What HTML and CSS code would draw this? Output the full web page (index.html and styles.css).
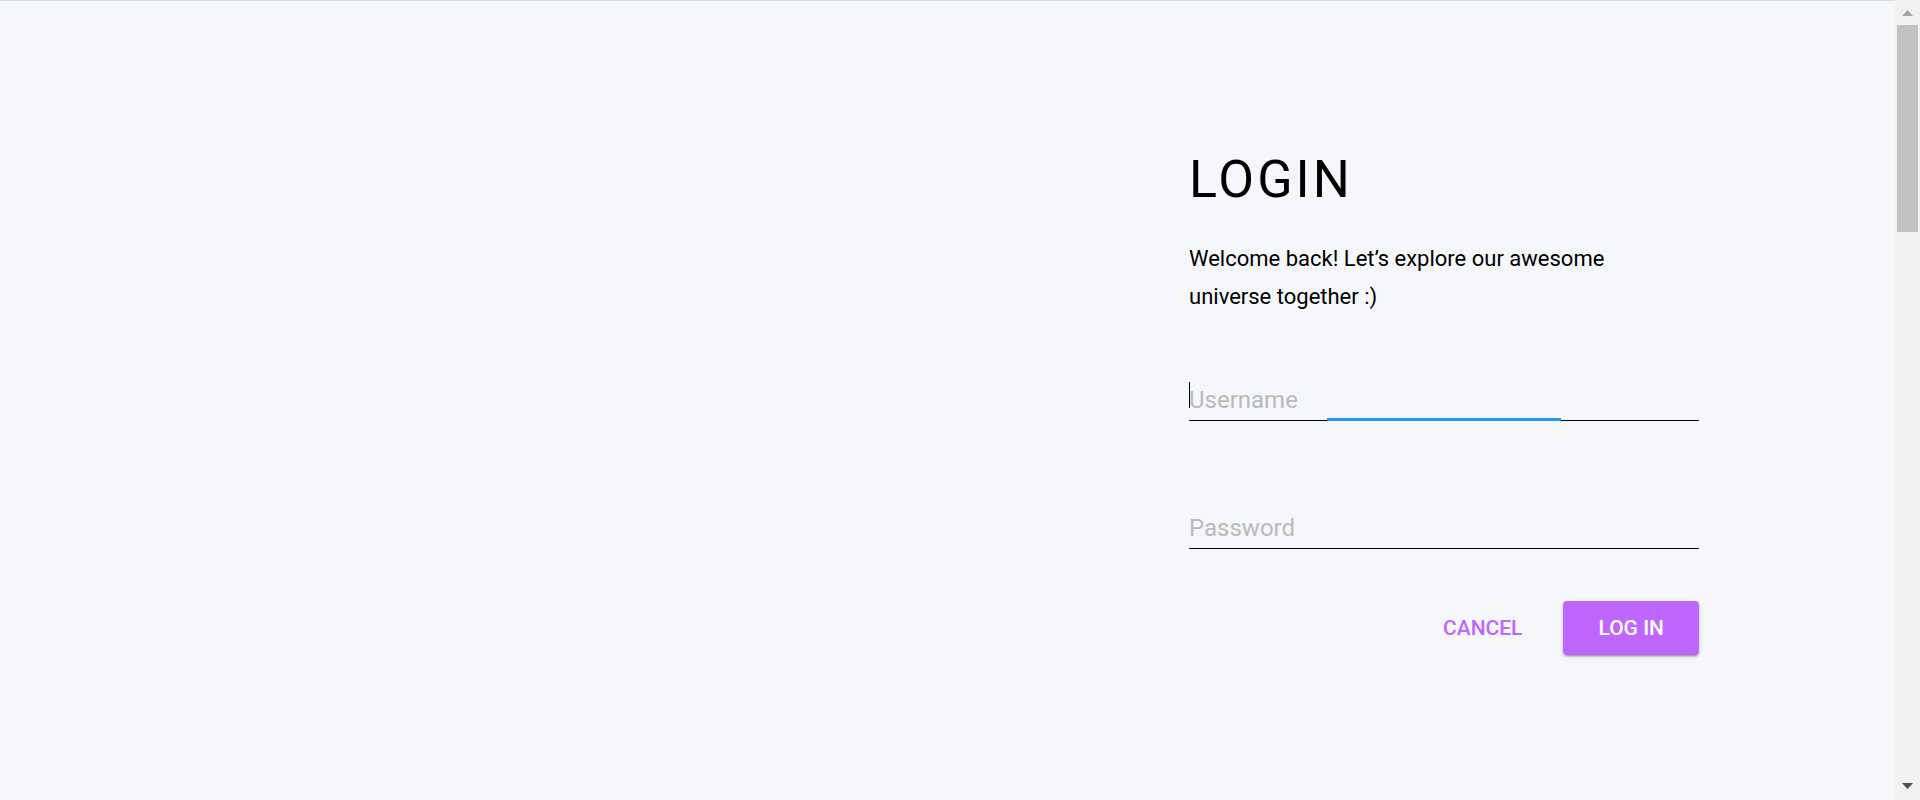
FILE: index.html
```html
<!DOCTYPE html>
<html lang="en">
<head>
<meta charset="utf-8">
<title>Login</title>
<link rel="stylesheet" href="styles.css">
</head>
<body>
<main class="page">
  <div class="side"></div>
  <section class="form">
    <h1 class="title">LOGIN</h1>
    <p class="intro">Welcome back! Let’s explore our awesome universe together :)</p>
    <div class="field field-user">
      <input class="input" type="text" placeholder="Username">
      <span class="caret"></span>
      <span class="focus-bar"></span>
    </div>
    <div class="field field-pass">
      <input class="input" type="password" placeholder="Password">
    </div>
    <div class="actions">
      <button class="btn btn-text" type="button">Cancel</button>
      <button class="btn btn-primary" type="button">Log in</button>
    </div>
  </section>
</main>
<aside class="scrollbar" aria-hidden="true">
  <div class="sb-btn sb-up">
    <svg width="11" height="6" viewBox="0 0 11 6"><polygon points="5.5,0 11,6 0,6" fill="#a3a3a3"/></svg>
  </div>
  <div class="sb-track">
    <div class="sb-thumb"></div>
  </div>
  <div class="sb-btn sb-down">
    <svg width="11" height="6" viewBox="0 0 11 6"><polygon points="0,0 11,0 5.5,6" fill="#505050"/></svg>
  </div>
</aside>
</body>
</html>
```

FILE: styles.css
```css
html, body {
  margin: 0;
  padding: 0;
}

body {
  background: #f5f7fa;
  font-family: Roboto, "Noto Sans", Arial, sans-serif;
  color: #000;
  display: flex;
  align-items: flex-start;
}

.page {
  flex: 1;
  border-top: 1px solid #d3dde8;
  display: grid;
  grid-template-columns: 1fr 510px;
  padding-right: 196px;
  min-height: 2900px;
  box-sizing: border-box;
}

.scrollbar {
  flex: none;
  width: 25px;
  height: 100vh;
  position: sticky;
  top: 0;
  background: #f1f1f1;
  display: flex;
  flex-direction: column;
}

.sb-btn {
  height: 25px;
  flex: none;
  display: flex;
  justify-content: center;
}

.sb-up {
  align-items: flex-start;
  padding-top: 10px;
  box-sizing: border-box;
}

.sb-down {
  align-items: flex-start;
  padding-top: 8px;
  box-sizing: border-box;
}

.sb-btn svg {
  display: block;
}

.sb-track {
  flex: 1;
  padding: 0 2px;
}

.sb-thumb {
  height: 207px;
  background: #c1c1c1;
}

.form {
  padding-top: 149px;
  display: flex;
  flex-direction: column;
}

.title {
  margin: 0;
  font-size: 52px;
  font-weight: 400;
  line-height: 60px;
  letter-spacing: 3px;
}

.intro {
  margin: 30px 0 0;
  max-width: 480px;
  font-size: 22px;
  line-height: 38px;
}

.field {
  position: relative;
}

.field-user {
  margin-top: 64px;
}

.field-pass {
  margin-top: 87px;
}

.input {
  display: block;
  width: 100%;
  box-sizing: border-box;
  border: 0;
  border-bottom: 1px solid #000;
  background: transparent;
  padding: 6px 0;
  font-family: inherit;
  font-size: 24px;
  line-height: 28px;
  color: #000;
  outline: none;
}

.input::placeholder {
  color: #bababa;
}

.caret {
  position: absolute;
  left: 0;
  top: 2px;
  width: 1px;
  height: 26px;
  background: #000;
}

.focus-bar {
  position: absolute;
  left: 138px;
  width: 234px;
  bottom: 0;
  height: 3px;
  background: #2196f3;
}

.actions {
  margin-top: 52px;
  display: flex;
  justify-content: flex-end;
  gap: 6px;
}

.btn {
  height: 54px;
  padding: 0 35px;
  border: 0;
  border-radius: 4px;
  font-family: inherit;
  font-size: 21px;
  font-weight: 500;
  text-transform: uppercase;
  cursor: pointer;
}

.btn-text {
  background: transparent;
  color: #bf66ff;
}

.btn-primary {
  background: #bf66ff;
  color: #fff;
  box-shadow: 0 3px 1px -2px rgba(0, 0, 0, 0.2), 0 2px 2px 0 rgba(0, 0, 0, 0.14), 0 1px 5px 0 rgba(0, 0, 0, 0.12);
}
```
